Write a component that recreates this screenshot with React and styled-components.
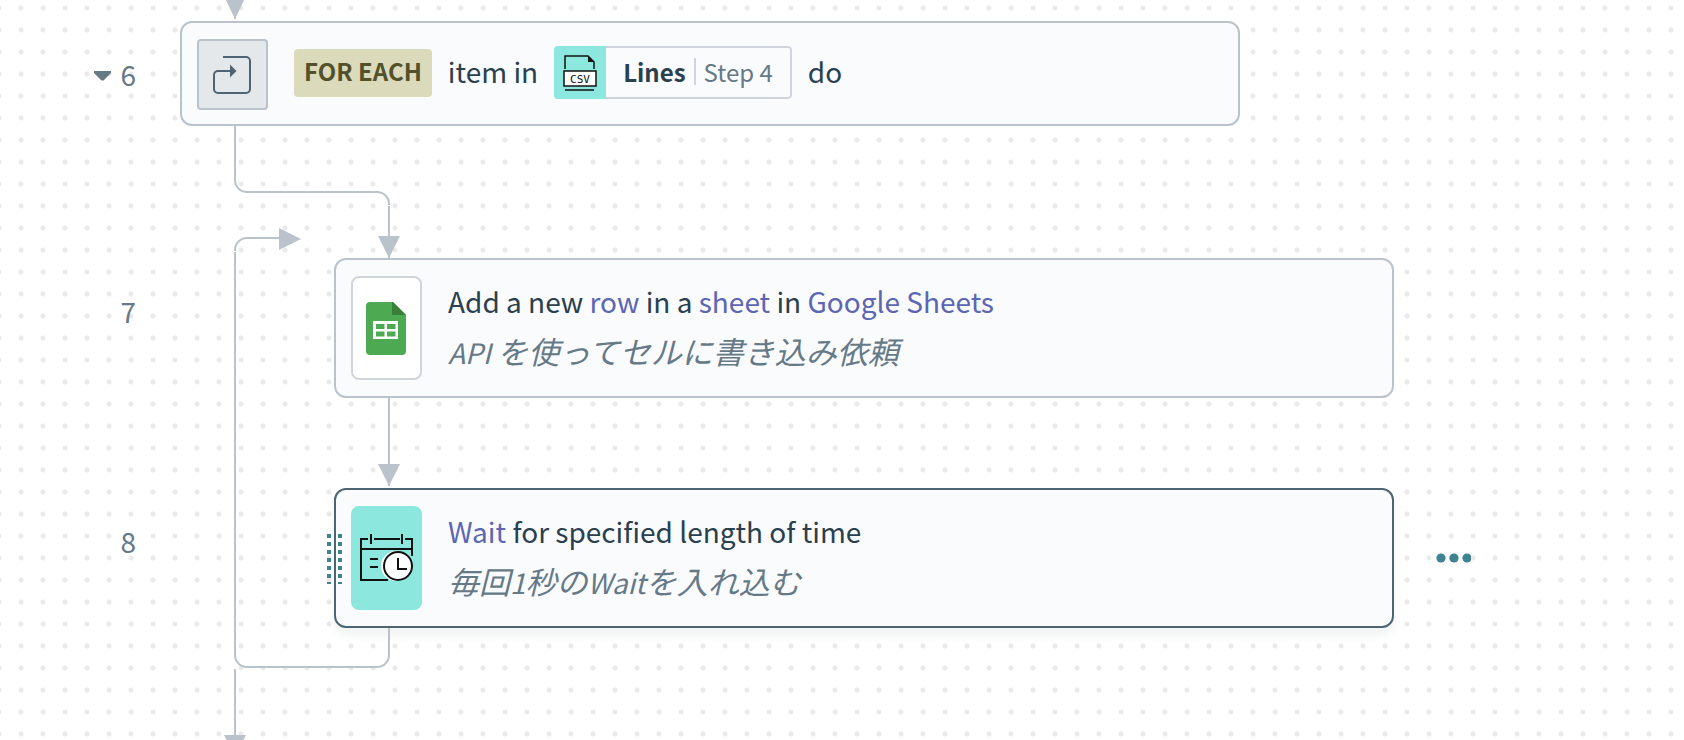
import React from 'react';
import styled, { createGlobalStyle, css } from 'styled-components';

const GlobalStyle = createGlobalStyle`
  * {
    box-sizing: border-box;
  }
  body {
    margin: 0;
    overflow: hidden;
    background-color: #fff;
    font-family: 'Noto Sans CJK JP', 'Noto Sans', sans-serif;
    font-size: 28px;
    color: #2a404e;
  }
`;
const Canvas = styled.main`
  min-height: 100vh;
  background-image: radial-gradient(circle at center, #eaeaea 2px, transparent 3px);
  background-size: 22px 22px;
  background-position: 10px 19px;
`;
const Recipe = styled.ol`
  position: relative;
  display: flex;
  flex-direction: column;
  margin: 0;
  padding: 0;
  list-style: none;
`;
const Step = styled.li`
  display: grid;
  grid-template-columns: 180px minmax(0, 1fr) 290px;
`;
const StepGutter = styled.div`
  display: flex;
  align-items: center;
  justify-content: flex-end;
  gap: 9px;
  height: 105px;
  padding-right: 44px;
  line-height: 40px;
  color: #667987;
`;
const CollapseButton = styled.button`
  display: flex;
  padding: 4px 0 0;
  border: 0;
  background: none;
`;
const Card = styled.section`
  position: relative;
  display: flex;
  align-items: ${props => props.$inline ? 'center' : 'flex-start'};
  margin-left: ${props => props.$nested ? '154px' : '0'};
  margin-right: ${props => props.$nested ? '0' : '154px'};
  padding: ${props => props.$inline ? '16px 15px 14px' : '16px 15px'};
  border: 2px solid ${props => props.$active ? '#4e6472' : '#bac3cb'};
  border-radius: 12px;
  background-color: #fafbfd;
  ${props => props.$active && css`
    box-shadow: 0 8px 10px rgba(40, 70, 60, 0.06);
  `}
`;
const IconTile = styled.div`
  display: flex;
  flex: none;
  align-items: center;
  justify-content: center;
  width: 71px;
  height: ${props => props.$height};
  border: 2px solid ${props => props.$border};
  border-radius: ${props => props.$radius};
  background-color: ${props => props.$fill};
`;
const StepText = styled.div`
  padding-left: 26px;
`;
const Title = styled.h2`
  margin: 0;
  font-size: 28px;
  font-weight: 400;
  line-height: 50px;
`;
const Comment = styled.p`
  margin: 0;
  font-size: 31px;
  font-style: italic;
  line-height: 50px;
  color: #667987;
`;
const Latin = styled.span`
  font-size: 28px;
`;
const Keyword = styled.span`
  color: #5c66b3;
`;
const LoopLine = styled.div`
  display: flex;
  align-items: center;
  gap: 16px;
  padding-left: 26px;
  padding-bottom: 4px;
  line-height: 44px;
`;
const LoopText = styled.span`
  padding-bottom: 4px;
`;
const LoopBadge = styled.span`
  padding: 0 10px 4px;
  border-radius: 4px;
  background-color: #dbdabb;
  font-size: 24px;
  font-weight: 700;
  color: #52512b;
`;
const Pill = styled.span`
  display: flex;
  height: 53px;
  border-radius: 4px;
  overflow: hidden;
  font-size: 24px;
`;
const PillIcon = styled.span`
  display: flex;
  align-items: center;
  justify-content: center;
  width: 52px;
  background-color: #8ce8de;
`;
const PillBody = styled.span`
  display: flex;
  align-items: center;
  padding: 0 17px 2px;
  border: 2px solid #cfd5db;
  border-left: 0;
  border-radius: 0 4px 4px 0;
`;
const PillSource = styled.span`
  margin-left: 8px;
  padding-left: 8px;
  border-left: 2px solid #cfd5db;
  line-height: 27px;
  color: #667987;
`;
const DragHandle = styled.span`
  position: absolute;
  top: 44px;
  left: -9px;
  width: 15px;
  height: 50px;
  background-image:
    linear-gradient(#3d8391 4px, transparent 4px),
    linear-gradient(#3d8391 4px, transparent 4px);
  background-position: left top, right top;
  background-size: 4px 8px;
  background-repeat: repeat-y;
`;
const StepActions = styled.div`
  display: flex;
  align-items: center;
  padding-left: 42px;
`;
const MoreButton = styled.button`
  display: flex;
  padding: 0;
  border: 0;
  background: none;
`;
const Connector = styled.li`
  display: flex;
  height: ${props => props.$height};
  padding-left: ${props => props.$nested ? '378px' : '224px'};
`;
const LoopWire = styled.svg`
  position: absolute;
  top: 226px;
  left: 234px;
  pointer-events: none;
`;

const wire = { fill: 'none', stroke: '#bac3cb', strokeWidth: 2 };

function CaretIcon() {
  return (
    <svg width="17" height="10" viewBox="0 0 17 10" aria-hidden="true">
      <path d="M0 0H17V2L9.500 9.500H7.500L0 2Z" fill="#667987" />
    </svg>
  );
}

function RepeatIcon() {
  return (
    <svg width="39" height="38" viewBox="0 0 39 38" aria-hidden="true">
      <path d="M10 1H33a4 4 0 0 1 4 4V33a4 4 0 0 1-4 4H5a4 4 0 0 1-4-4V19a4 4 0 0 1 4-4H18" fill="none" stroke="#4e6472" strokeWidth="2" />
      <path d="M17 8.500L23.500 15L17 21.500Z" fill="#4e6472" />
    </svg>
  );
}

function CsvIcon() {
  return (
    <svg width="34" height="36" viewBox="0 0 34 36" aria-hidden="true">
      <path d="M2 14V1H25L31 7V14" fill="none" stroke="#111" strokeWidth="1.500" />
      <path d="M25 1V7H31.500Z" fill="#111" />
      <rect x="1" y="16" width="32" height="15" fill="#fff" stroke="#111" strokeWidth="1.500" />
      <path d="M2 35H31" stroke="#111" strokeWidth="1.500" />
      <text x="17" y="28" textAnchor="middle" fontFamily="DejaVu Sans Mono, monospace" fontSize="11" fill="#111">CSV</text>
    </svg>
  );
}

function SheetsIcon() {
  return (
    <svg width="41" height="53" viewBox="0 0 41 53" aria-hidden="true">
      <path d="M4 0H27L40 13V49a4 4 0 0 1-4 4H4a4 4 0 0 1-4-4V4a4 4 0 0 1 4-4Z" fill="#4ea953" />
      <path d="M26 0H27L40 13H26Z" fill="#3b8039" />
      <path d="M7 19H32V37H7Z" fill="#fff" />
      <path d="M10 22H18.500V27H10ZM21 22H29.500V27H21ZM10 29.500H18.500V34.500H10ZM21 29.500H29.500V34.500H21Z" fill="#4ea953" />
    </svg>
  );
}

function ClockIcon() {
  return (
    <svg width="53" height="48" viewBox="0 0 53 48" aria-hidden="true">
      <g fill="none" stroke="#111" strokeWidth="2">
        <path d="M8 5H1V46H28M14 5H40M45 5H52V22M1 15H52" />
        <path d="M11 0V10M42 0V10M10 25H18M10 33H18" />
      </g>
      <circle cx="36" cy="32" r="15" fill="#fff" />
      <circle cx="38" cy="32" r="14" fill="#fff" stroke="#111" strokeWidth="2" />
      <path d="M38 24V35H47" fill="none" stroke="#111" strokeWidth="2" />
    </svg>
  );
}

function MoreIcon() {
  return (
    <svg width="35" height="10" viewBox="0 0 35 10" fill="#3d8391" aria-hidden="true">
      <circle cx="5" cy="5" r="4.600" />
      <circle cx="18" cy="5" r="4.600" />
      <circle cx="31" cy="5" r="4.600" />
    </svg>
  );
}

export default function App() {
  return (
    <Canvas>
      <GlobalStyle />
      <Recipe>
        <Connector $height="21px" aria-hidden="true">
          <svg width="22" height="21" viewBox="0 0 22 21">
            <path d="M0 -4H22L12 17V19H10V17Z" fill="#bac3cb" />
          </svg>
        </Connector>

        <Step>
          <StepGutter>
            <CollapseButton aria-label="Collapse step 6"><CaretIcon /></CollapseButton>
            6
          </StepGutter>
          <Card $inline>
            <IconTile $height="71px" $radius="4px" $border="#bac3cb" $fill="#e4e8eb">
              <RepeatIcon />
            </IconTile>
            <LoopLine>
              <LoopBadge>FOR EACH</LoopBadge>
              <LoopText>item in</LoopText>
              <Pill>
                <PillIcon><CsvIcon /></PillIcon>
                <PillBody>
                  <b>Lines</b>
                  <PillSource>Step 4</PillSource>
                </PillBody>
              </Pill>
              <LoopText>do</LoopText>
            </LoopLine>
          </Card>
        </Step>

        {/* steps down into the loop body */}
        <Connector $height="132px" aria-hidden="true">
          <svg width="180" height="132" viewBox="0 0 180 132">
            <path d="M11 0V54a12 12 0 0 0 12 12H153a12 12 0 0 1 12 12V79M165 80V132" {...wire} />
            <path d="M154 110H176L165 132Z" fill="#bac3cb" />
          </svg>
        </Connector>

        <Step>
          <StepGutter>7</StepGutter>
          <Card $nested>
            <IconTile $height="104px" $radius="8px" $border="#cfd5db" $fill="#fff">
              <SheetsIcon />
            </IconTile>
            <StepText>
              <Title>
                Add a new <Keyword>row</Keyword> in a <Keyword>sheet</Keyword> in <Keyword>Google Sheets</Keyword>
              </Title>
              <Comment><Latin>API </Latin>を使ってセルに書き込み依頼</Comment>
            </StepText>
          </Card>
        </Step>

        <Connector $height="90px" $nested aria-hidden="true">
          <svg width="22" height="90" viewBox="0 0 22 90">
            <path d="M11 0V88" {...wire} />
            <path d="M0 66H22L11 88Z" fill="#bac3cb" />
          </svg>
        </Connector>

        <Step>
          <StepGutter>8</StepGutter>
          <Card $nested $active>
            <DragHandle />
            <IconTile $height="104px" $radius="8px" $border="#8ce8de" $fill="#8ce8de">
              <ClockIcon />
            </IconTile>
            <StepText>
              <Title><Keyword>Wait</Keyword> for specified length of time</Title>
              <Comment>毎回<Latin>1</Latin>秒の<Latin>Wait</Latin>を入れ込む</Comment>
            </StepText>
          </Card>
          <StepActions>
            <MoreButton aria-label="Step 8 actions"><MoreIcon /></MoreButton>
          </StepActions>
        </Step>

        <Connector $height="112px" aria-hidden="true">
          <svg width="22" height="112" viewBox="0 0 22 112">
            <path d="M11 41V108" {...wire} />
            <path d="M0 107H22L11 129Z" fill="#bac3cb" />
          </svg>
        </Connector>

        {/* return path from the last step to the top of the loop */}
        <LoopWire as="svg" width="160" height="444" viewBox="0 0 160 444" aria-hidden="true">
          <path d="M155 402V429a12 12 0 0 1-12 12H13a12 12 0 0 1-12-12V26M1 25V24a12 12 0 0 1 12-12H46" {...wire} />
          <path d="M45 2L67 13L45 24Z" fill="#bac3cb" />
        </LoopWire>
      </Recipe>
    </Canvas>
  );
}
